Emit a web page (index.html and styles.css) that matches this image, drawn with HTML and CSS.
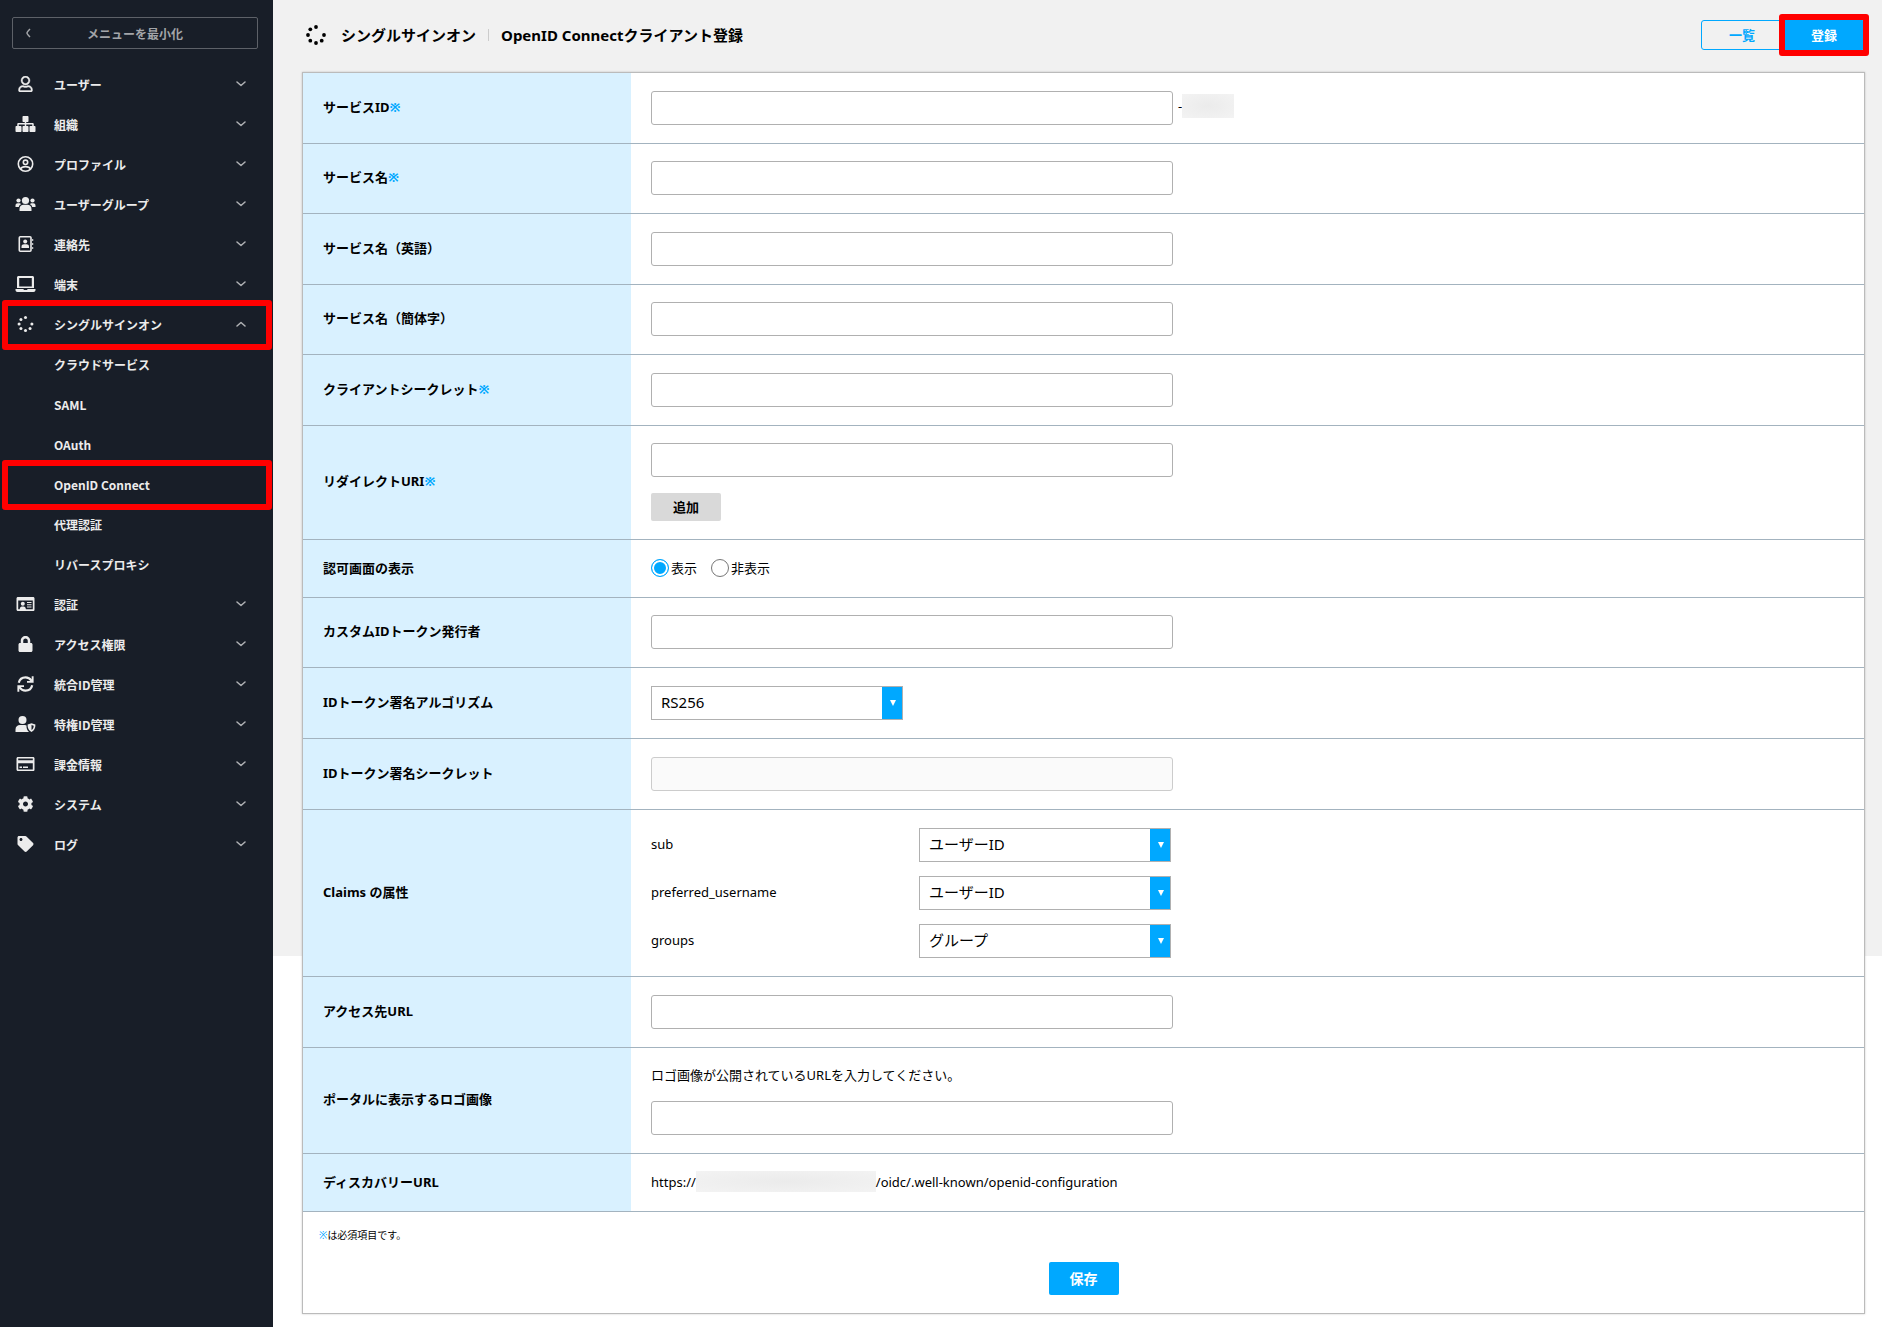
FILE: index.html
```
<!DOCTYPE html>
<html lang="ja">
<head>
  <meta charset="UTF-8">
  <meta name="viewport" content="width=device-width, initial-scale=1">
  <title>OpenID Connectクライアント登録</title>
  <link rel="stylesheet" href="styles.css">
</head>
<body>
  <!-- shared icons -->
  <svg class="defs" aria-hidden="true">
    <symbol id="down" viewBox="0 0 10 6"><path d="M1 1l4 3.500L9 1" fill="none" stroke="currentColor" stroke-width="1.500" stroke-linecap="round" stroke-linejoin="round"/></symbol>
    <symbol id="spinner" viewBox="0 0 20 20">
      <circle cx="10" cy="2" r="1.900"/><circle cx="4.300" cy="4.300" r="1.900"/><circle cx="2" cy="10" r="1.900"/><circle cx="4.300" cy="15.700" r="1.900"/><circle cx="10" cy="18" r="1.900"/><circle cx="15.700" cy="15.700" r="1.900"/><circle cx="18" cy="10" r="1.900"/>
    </symbol>
  </svg>

  <div class="layout">
    <aside class="sidebar">
      <button class="minimize" type="button">
        <svg viewBox="0 0 6 10" width="6" height="10"><path d="M5 1C3 3 2 4 2 5s1 2 3 4" fill="none" stroke="currentColor" stroke-width="1.500"/></svg>
        <span>メニューを最小化</span>
      </button>
      <nav>
        <ul class="menu">
          <li><a href="#"><svg class="icon" viewBox="-96 0 640 512"><path d="M313.600 304c-28.700 0-42.500 16-89.600 16-47.100 0-60.800-16-89.600-16C60.200 304 0 364.200 0 438.400V464c0 26.500 21.500 48 48 48h352c26.500 0 48-21.500 48-48v-25.600c0-74.200-60.200-134.400-134.400-134.400zM400 464H48v-25.600c0-47.600 38.800-86.400 86.400-86.400 14.600 0 38.300 16 89.600 16 51.700 0 74.900-16 89.600-16 47.600 0 86.400 38.800 86.400 86.400V464zM224 288c79.500 0 144-64.500 144-144S303.500 0 224 0 80 64.500 80 144s64.500 144 144 144zm0-240c52.900 0 96 43.100 96 96s-43.100 96-96 96-96-43.100-96-96 43.100-96 96-96z" stroke="currentColor" stroke-width="12"/></svg><span>ユーザー</span><svg class="arrow"><use href="#down"/></svg></a></li>
          <li><a href="#"><svg class="icon" viewBox="0 0 640 512"><path d="M160 320H32c-18 0-32 14-32 32v128c0 18 14 32 32 32h128c18 0 32-14 32-32V352c0-18-14-32-32-32zm-56-48h192v48h48v-48h192v48h48v-58c0-21-17-38-38-38H344v-32h40c18 0 32-14 32-32V32c0-18-14-32-32-32H256c-18 0-32 14-32 32v128c0 18 14 32 32 32h40v32H94c-21 0-38 17-38 38v58h48zm280 48H256c-18 0-32 14-32 32v128c0 18 14 32 32 32h128c18 0 32-14 32-32V352c0-18-14-32-32-32zm224 0H480c-18 0-32 14-32 32v128c0 18 14 32 32 32h128c18 0 32-14 32-32V352c0-18-14-32-32-32z"/></svg><span>組織</span><svg class="arrow"><use href="#down"/></svg></a></li>
          <li><a href="#"><svg class="icon line" viewBox="0 0 20 16"><circle cx="10" cy="8" r="7.200"/><circle cx="10" cy="6.300" r="2.200"/><path d="M5 13c1-2 2.500-2.400 5-2.400s4 .4 5 2.400"/></svg><span>プロファイル</span><svg class="arrow"><use href="#down"/></svg></a></li>
          <li><a href="#"><svg class="icon" viewBox="0 0 20 16"><circle cx="10" cy="4.500" r="3.600"/><circle cx="3" cy="4.500" r="2.100"/><circle cx="17" cy="4.500" r="2.100"/><path d="M4 15v-2c0-3 2-4.200 4-4.200h4c2 0 4 1.200 4 4.200v2zM0 11V9.500C0 8 1 7.200 2.200 7.200h2L5.700 8C4.300 8.800 3.500 9.800 3.300 11zM20 11V9.500c0-1.500-1-2.300-2.200-2.300h-2l-1.500.8c1.400.8 2.200 1.800 2.400 3z"/></svg><span>ユーザーグループ</span><svg class="arrow"><use href="#down"/></svg></a></li>
          <li><a href="#"><svg class="icon" viewBox="0 0 20 16"><rect x="3.800" y=".8" width="11.700" height="14.400" rx="1" fill="none" stroke="currentColor" stroke-width="1.600"/><circle cx="9.700" cy="5.500" r="2"/><path d="M6 12v-1.200C6 9 7.200 8.300 8.500 8.300H11c1.300 0 2.500.7 2.500 2.500V12zM16.700 3h1v2h-1zm0 4h1v2h-1zm0 4h1v2h-1z"/></svg><span>連絡先</span><svg class="arrow"><use href="#down"/></svg></a></li>
          <li><a href="#"><svg class="icon" viewBox="0 0 20 16"><path d="M3 0h14c.8 0 1.500.7 1.500 1.500V12h-17V1.500C1.500.7 2.200 0 3 0zm.7 2v8.500h12.600V2zM0 13h7.800l.7 1h3l.7-1H20v1c0 1.200-.8 2-2 2H2c-1.200 0-2-.8-2-2z" fill-rule="evenodd"/></svg><span>端末</span><svg class="arrow"><use href="#down"/></svg></a></li>
          <li class="marked"><a href="#"><svg class="icon"><use href="#spinner"/></svg><span>シングルサインオン</span><svg class="arrow up"><use href="#down"/></svg></a></li>
          <li class="sub"><a href="#">クラウドサービス</a></li>
          <li class="sub"><a href="#">SAML</a></li>
          <li class="sub"><a href="#">OAuth</a></li>
          <li class="sub marked"><a href="#">OpenID Connect</a></li>
          <li class="sub"><a href="#">代理認証</a></li>
          <li class="sub"><a href="#">リバースプロキシ</a></li>
          <li><a href="#"><svg class="icon" viewBox="0 0 20 16"><path d="M2.500 1h15c1 0 1.500.6 1.500 1.500v11c0 1-.5 1.500-1.500 1.500h-15c-1 0-1.500-.6-1.500-1.500v-11C1 1.600 1.600 1 2.500 1zm.2 3.500v8.800h1.500c.2-1.900 1-2.800 2.200-2.800h1.700c1.300 0 2.100.9 2.300 2.800h6.900V4.500z" fill-rule="evenodd"/><circle cx="7.300" cy="7.800" r="2"/><path d="M11.500 6H16v1h-4.500zm0 2.200H16v1h-4.500zm0 2.200H16v1h-4.500z"/></svg><span>認証</span><svg class="arrow"><use href="#down"/></svg></a></li>
          <li><a href="#"><svg class="icon" viewBox="-96 0 640 512"><path d="M400 224h-24v-72C376 68.200 307.800 0 224 0S72 68.200 72 152v72H48c-26.500 0-48 21.500-48 48v192c0 26.500 21.500 48 48 48h352c26.500 0 48-21.500 48-48V272c0-26.500-21.500-48-48-48zm-104 0H152v-72c0-39.700 32.300-72 72-72s72 32.300 72 72v72z"/></svg><span>アクセス権限</span><svg class="arrow"><use href="#down"/></svg></a></li>
          <li><a href="#"><svg class="icon" viewBox="0 0 20 16"><path d="M3.300 6.800C4 3.700 6.600 1.400 10 1.400c2.600 0 4.600 1.200 6 3.200M16.700 9.200c-.7 3.100-3.300 5.400-6.700 5.400-2.600 0-4.600-1.200-6-3.200" fill="none" stroke="currentColor" stroke-width="2.200"/><path d="M16.200.3h1.900v6.500h-6.600V4.900h3.200l1.500-1.500zM3.800 15.700H1.900V9.200h6.600v1.900H5.300l-1.500 1.500z"/></svg><span>統合ID管理</span><svg class="arrow"><use href="#down"/></svg></a></li>
          <li><a href="#"><svg class="icon" viewBox="0 0 20 16"><circle cx="7" cy="4" r="4"/><path d="M0 16v-2.500C0 10.500 2 9 4.500 9h5l1.500.5c-.2 3 .8 5 2.500 6.500z"/><path d="M16 7.200l3.900 1.300c.2 3.600-1.200 6.200-3.900 7.500-2.700-1.300-4.100-3.900-3.900-7.500zm0 1.900v4.900c1.500-.9 2.200-2.300 2.200-4.200z" fill-rule="evenodd"/></svg><span>特権ID管理</span><svg class="arrow"><use href="#down"/></svg></a></li>
          <li><a href="#"><svg class="icon" viewBox="0 0 20 16"><path d="M2.500 1h15c1 0 1.500.6 1.500 1.500v11c0 1-.5 1.500-1.500 1.500h-15c-1 0-1.500-.6-1.500-1.500v-11C1 1.600 1.600 1 2.500 1zm.2 1.600v1.600h14.600V2.600zm0 4.600v6.200h14.600V7.200zM4 10.500h2.500V12H4zm3.500 0h5V12h-5z" fill-rule="evenodd"/></svg><span>課金情報</span><svg class="arrow"><use href="#down"/></svg></a></li>
          <li><a href="#"><svg class="icon" viewBox="-64 0 640 512"><path d="M487.400 315.700l-42.600-24.600c4.300-23.200 4.300-47 0-70.200l42.600-24.600c4.900-2.800 7.100-8.600 5.500-14-11.100-35.600-30-67.800-54.700-94.600-3.800-4.100-10-5.100-14.800-2.300L380.800 110c-17.900-15.400-38.500-27.300-60.800-35.100V25.800c0-5.600-3.900-10.500-9.400-11.700-36.700-8.200-74.300-7.800-109.200 0-5.500 1.200-9.400 6.100-9.400 11.700V75c-22.200 7.900-42.800 19.800-60.800 35.100L88.700 85.500c-4.900-2.800-11-1.900-14.800 2.300-24.700 26.700-43.600 58.900-54.700 94.600-1.700 5.400.6 11.200 5.500 14L67.300 221c-4.300 23.200-4.300 47 0 70.200l-42.600 24.600c-4.900 2.800-7.100 8.600-5.500 14 11.100 35.600 30 67.800 54.700 94.600 3.800 4.100 10 5.100 14.800 2.300l42.600-24.600c17.900 15.400 38.500 27.300 60.800 35.100v49.200c0 5.600 3.900 10.500 9.400 11.700 36.700 8.200 74.300 7.800 109.200 0 5.500-1.200 9.400-6.100 9.400-11.700v-49.200c22.200-7.900 42.800-19.800 60.800-35.100l42.600 24.600c4.900 2.800 11 1.900 14.800-2.300 24.700-26.700 43.600-58.900 54.700-94.600 1.500-5.500-.7-11.300-5.600-14.100zM256 336c-44.100 0-80-35.900-80-80s35.900-80 80-80 80 35.900 80 80-35.900 80-80 80z"/></svg><span>システム</span><svg class="arrow"><use href="#down"/></svg></a></li>
          <li><a href="#"><svg class="icon" viewBox="-64 0 640 512"><path d="M0 252V48C0 21.500 21.500 0 48 0h204a48 48 0 0 1 34 14l212 212c18.700 18.700 18.700 49 0 68L294 498c-18.700 18.700-49 18.700-68 0L14 286a48 48 0 0 1-14-34zM112 64c-26.500 0-48 21.500-48 48s21.500 48 48 48 48-21.500 48-48-21.500-48-48-48z"/></svg><span>ログ</span><svg class="arrow"><use href="#down"/></svg></a></li>
        </ul>
      </nav>
    </aside>

    <main class="main">
      <header class="header">
        <svg class="title-icon"><use href="#spinner"/></svg>
        <h1>シングルサインオン</h1>
        <h2>OpenID Connectクライアント登録</h2>
        <div class="tabs">
          <button class="tab" type="button">一覧</button>
          <div class="marked"><button class="tab active" type="button">登録</button></div>
        </div>
      </header>

      <form class="card">
        <table class="form-table">
          <tr><th><label for="service-id">サービスID<i>※</i></label></th><td><div class="line-row"><input type="text" id="service-id"><span class="suffix">-<span class="mask short"></span></span></div></td></tr>
          <tr><th><label for="service-name">サービス名<i>※</i></label></th><td><input type="text" id="service-name"></td></tr>
          <tr><th><label for="service-en">サービス名（英語）</label></th><td><input type="text" id="service-en"></td></tr>
          <tr><th><label for="service-zh">サービス名（簡体字）</label></th><td><input type="text" id="service-zh"></td></tr>
          <tr><th><label for="secret">クライアントシークレット<i>※</i></label></th><td><input type="text" id="secret"></td></tr>
          <tr><th><label for="redirect">リダイレクトURI<i>※</i></label></th><td><div class="stack"><input type="text" id="redirect"><button class="add" type="button">追加</button></div></td></tr>
          <tr class="short-row">
            <th>認可画面の表示</th>
            <td>
              <div class="radios">
                <label><input type="radio" name="consent" checked>表示</label>
                <label><input type="radio" name="consent">非表示</label>
              </div>
            </td>
          </tr>
          <tr><th><label for="issuer">カスタムIDトークン発行者</label></th><td><input type="text" id="issuer"></td></tr>
          <tr><th><label for="alg">IDトークン署名アルゴリズム</label></th><td><div class="select"><select id="alg"><option>RS256</option></select></div></td></tr>
          <tr class="tall"><th><label for="sign-secret">IDトークン署名シークレット</label></th><td><input type="text" id="sign-secret" disabled></td></tr>
          <tr class="claims-row">
            <th>Claims の属性</th>
            <td>
              <div class="claims">
                <label for="sub">sub</label>
                <div class="select"><select id="sub"><option>ユーザーID</option></select></div>
                <label for="username">preferred_username</label>
                <div class="select"><select id="username"><option>ユーザーID</option></select></div>
                <label for="groups">groups</label>
                <div class="select"><select id="groups"><option>グループ</option></select></div>
              </div>
            </td>
          </tr>
          <tr class="tall"><th><label for="access-url">アクセス先URL</label></th><td><input type="text" id="access-url"></td></tr>
          <tr><th><label for="logo">ポータルに表示するロゴ画像</label></th><td><div class="stack"><p>ロゴ画像が公開されているURLを入力してください。</p><input type="text" id="logo"></div></td></tr>
          <tr class="short-row"><th>ディスカバリーURL</th><td><div class="line-row">https://<span class="mask"></span>/oidc/.well-known/openid-configuration</div></td></tr>
        </table>
        <div class="card-footer">
          <p class="note"><i>※</i>は必須項目です。</p>
          <button class="save" type="submit">保存</button>
        </div>
      </form>
    </main>
  </div>
</body>
</html>
```
FILE: styles.css
```
* {
  box-sizing: border-box;
}
body {
  margin: 0;
  font-family: "Noto Sans", "Noto Sans CJK JP", sans-serif;
  font-size: 13px;
  line-height: 20px;
  color: #000;
}
button, input, select {
  font-family: inherit;
}
h1, h2, p, ul {
  margin: 0;
  padding: 0;
}
i {
  font-style: normal;
  color: #00a8ff;
}
.defs {
  display: none;
}
.layout {
  display: flex;
  min-height: 100vh;
  background: linear-gradient(#f1f1f1 72%, #fff 72%);
}

/* sidebar */
.sidebar {
  flex: none;
  width: 273px;
  padding-top: 17px;
  background: #181e28;
  font-family: "Noto Sans CJK JP", sans-serif;
}
.minimize {
  display: flex;
  align-items: center;
  width: 246px;
  height: 32px;
  margin: 0 12px 16px;
  padding: 0 12px;
  background: none;
  border: 1px solid #5d6168;
  border-radius: 2px;
  color: #a3a5a9;
  font-size: 12px;
  font-weight: bold;
  cursor: pointer;
}
.minimize span {
  flex: 1;
  padding-right: 6px;
}
.menu {
  list-style: none;
}
.menu a {
  display: flex;
  align-items: center;
  height: 40px;
  padding: 0 27px 2px 15px;
  color: #ececec;
  font-size: 12px;
  line-height: 18px;
  font-weight: bold;
  text-decoration: none;
}
.menu span {
  flex: 1;
  padding-top: 2px;
}
.menu .sub a {
  padding: 0 27px 0 54px;
}
.icon {
  width: 21px;
  height: 16px;
  margin-right: 18px;
  fill: currentColor;
}
.line {
  fill: none;
  stroke: currentColor;
  stroke-width: 1.6px;
}
.arrow {
  width: 10px;
  height: 6px;
  color: #b0b2b5;
}
.up {
  transform: rotate(180deg);
}

/* red frame */
.marked {
  position: relative;
}
.marked::after {
  content: "";
  position: absolute;
  inset: -5px 1px -5px 2px;
  border: 6px solid #f00;
  border-radius: 3px;
  pointer-events: none;
}
.tabs .marked::after {
  inset: -6px -4px -6px -4px;
}

/* header */
.main {
  flex: 1;
  padding: 0 17px 14px 29px;
}
.header {
  display: flex;
  align-items: center;
  height: 72px;
  padding-bottom: 2px;
}
.title-icon {
  width: 20px;
  height: 20px;
  margin: 0 15px 0 4px;
}
.header h1, .header h2 {
  font-size: 15px;
  line-height: 20px;
}
.header h2::before {
  content: "";
  display: inline-block;
  width: 1px;
  height: 12px;
  margin: 0 12px;
  background: #ccc;
}
.tabs {
  display: flex;
  margin-left: auto;
}
.tab {
  width: 82px;
  height: 30px;
  padding: 0 0 2px;
  background: none;
  border: 1px solid #00a8ff;
  border-radius: 3px 0 0 3px;
  color: #00a8ff;
  font-size: 13px;
  font-weight: bold;
}
.active {
  background: #00a8ff;
  border-radius: 0 3px 3px 0;
  color: #fff;
}

/* form */
.card {
  background: #fff;
  border: 1px solid #bbb;
  box-shadow: 0 0 2px rgba(0,0,0,0.2);
}
.form-table {
  width: 100%;
  border-collapse: separate;
  border-spacing: 0;
}
.form-table th, .form-table td {
  height: 70px;
  padding: 17px 20px 18px;
  border-bottom: 1px solid #a3b3bf;
  text-align: left;
}
.form-table th {
  width: 328px;
  padding-top: 16px;
  padding-bottom: 19px;
  background: #d9f1ff;
}
.form-table tr:nth-child(odd) > *, .form-table .tall > * {
  height: 71px;
}
.form-table tr.short-row > * {
  height: 58px;
  padding-top: 0;
  padding-bottom: 2px;
}
.form-table tr.claims-row > * {
  height: 167px;
}
input[type="text"] {
  display: block;
  width: 522px;
  height: 34px;
  padding: 0 10px;
  background: #fff;
  border: 1px solid #b0b0b0;
  border-radius: 3px;
  font-size: 15px;
}
input[type="text"]:disabled {
  background: #fafafa;
  border-color: #ccc;
}
.line-row {
  display: flex;
  align-items: center;
}
.suffix {
  display: flex;
  align-items: center;
  margin-left: 5px;
  padding-bottom: 4px;
}
.mask {
  width: 180px;
  height: 21px;
  background: radial-gradient(#ebebeb, #f3f3f3);
}
.short {
  width: 52px;
  height: 24px;
}
.stack {
  display: flex;
  flex-direction: column;
  align-items: flex-start;
  gap: 16px;
}
.add {
  width: 70px;
  height: 28px;
  padding: 0 0 2px;
  background: #d9d9d9;
  border: 0;
  border-radius: 2px;
  font-size: 13px;
  font-weight: bold;
}
.radios {
  display: flex;
  gap: 14px;
}
.radios label {
  display: flex;
  align-items: center;
  gap: 2px;
}
input[type="radio"] {
  appearance: none;
  width: 18px;
  height: 18px;
  margin: 0;
  border: 1px solid #777;
  border-radius: 50%;
}
input[type="radio"]:checked {
  border-color: #00a8ff;
  background: #00a8ff;
  box-shadow: inset 0 0 0 2px #fff;
}
.select {
  position: relative;
  width: 252px;
}
.select select {
  display: block;
  appearance: none;
  width: 100%;
  height: 34px;
  padding: 0 30px 2px 9px;
  background: linear-gradient(#00a8ff, #00a8ff) right / 20px 100% no-repeat #fff;
  border: 1px solid #b0b0b0;
  border-radius: 0;
  color: #000;
  font-size: 15px;
}
.select::after {
  content: "";
  position: absolute;
  top: 14px;
  right: 7px;
  border: solid transparent;
  border-width: 6px 3px 0;
  border-top-color: #fff;
}
.claims {
  display: grid;
  grid-template-columns: 268px 252px;
  align-items: center;
  gap: 14px 0;
}
.claims label {
  padding-bottom: 2px;
}
.card-footer {
  display: flex;
  flex-direction: column;
  padding: 13px 16px 18px;
}
.note {
  font-size: 10px;
}
.save {
  align-self: center;
  width: 70px;
  height: 33px;
  margin-top: 17px;
  padding: 0 0 2px;
  background: #00a8ff;
  border: 0;
  border-radius: 2px;
  color: #fff;
  font-size: 14px;
  font-weight: bold;
}
```
